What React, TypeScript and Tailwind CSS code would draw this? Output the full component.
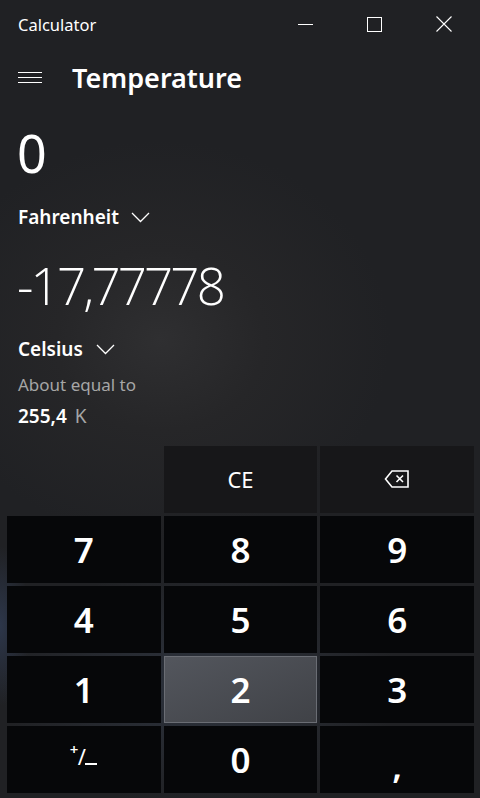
import React from "react";

const font = { fontFamily: '"Noto Sans", "Open Sans", "Liberation Sans", sans-serif' };

function Chevron() {
  return (
    <svg width="19" height="11" viewBox="0 0 19 11" fill="none" stroke="#ffffff" strokeWidth="1.3">
      <path d="M1 1 L9.5 9.5 L18 1" />
    </svg>
  );
}

function Key({ children, highlight, dim }: { children: React.ReactNode; highlight?: boolean; dim?: boolean }) {
  const base = "flex items-center justify-center text-white h-[67px]";
  const cls = highlight
    ? base + " bg-gradient-to-br from-[#53565d] to-[#404247] border border-[#6a6d74]"
    : dim
    ? base + " bg-[#171719]"
    : base + " bg-[#060709]";
  return <div className={cls}>{children}</div>;
}

export default function App() {
  return (
    <div
      className="w-[480px] h-[798px] overflow-hidden text-white flex flex-col relative"
      style={{
        ...font,
        background:
          "radial-gradient(ellipse 230px 200px at 160px 340px, #2f2f31 0%, #262628 45%, #202124 100%)",
      }}
    >
      {/* title bar */}
      <div className="h-[48px] flex items-start shrink-0">
        <div className="pl-[18px] pt-[17px] text-[16.5px] leading-none text-white flex-1">Calculator</div>
        <div className="flex pr-[2px] h-full">
          <div className="w-[69px] flex items-center justify-center">
            <div className="w-[15px] h-[1px] bg-white" />
          </div>
          <div className="w-[69px] flex items-center justify-center">
            <div className="w-[15px] h-[15px] border border-white" />
          </div>
          <div className="w-[69px] flex items-center justify-center">
            <svg width="16" height="16" viewBox="0 0 16 16" stroke="#fff" strokeWidth="1.1">
              <path d="M0.5 0.5 L15.5 15.5 M15.5 0.5 L0.5 15.5" />
            </svg>
          </div>
        </div>
      </div>

      {/* header */}
      <div className="flex items-start shrink-0">
        <div className="pl-[18px] w-[72px] flex flex-col gap-[4px] mt-[24px]">
          <div className="w-[24px] h-[1px] bg-white" />
          <div className="w-[24px] h-[1px] bg-white" />
          <div className="w-[24px] h-[1px] bg-white" />
        </div>
        <div className="text-[27px] font-semibold leading-none mt-[16px] h-[27px]">Temperature</div>
      </div>

      {/* input value */}
      <div className="pl-[17px] mt-[36px] text-[52px] leading-none h-[52px] shrink-0">0</div>

      <div className="pl-[18px] mt-[29px] h-[19px] flex items-start gap-[12px] shrink-0">
        <div className="text-[19px] font-semibold leading-none">Fahrenheit</div>
        <div className="mt-[4px]"><Chevron /></div>
      </div>

      {/* output value */}
      <div
        className="pl-[17px] mt-[33px] h-[51px] text-[51px] leading-none font-light tracking-[-2.8px] shrink-0"
        style={{ fontFamily: '"Open Sans", "Noto Sans", sans-serif' }}
      >
        -17,77778
      </div>

      <div className="pl-[18px] mt-[29px] h-[19px] flex items-start gap-[13px] shrink-0">
        <div className="text-[19px] font-semibold leading-none">Celsius</div>
        <div className="mt-[4px]"><Chevron /></div>
      </div>

      <div className="pl-[18px] mt-[17px] h-[17px] text-[17px] leading-none text-[#a6a6a6] shrink-0">About equal to</div>
      <div className="pl-[18px] mt-[14px] h-[19px] text-[19px] leading-none shrink-0 flex items-baseline gap-[8px]">
        <span className="font-semibold">255,4</span>
        <span className="text-[#a6a6a6]">K</span>
      </div>

      {/* keypad */}
      <div
        className="mt-auto pl-[7px] pr-[6px] pb-[5px] grid grid-cols-3 gap-[3px]"
        style={{
          background:
            "radial-gradient(ellipse 200px 120px at 200px 240px, rgba(70,85,110,0.35) 0%, rgba(40,45,55,0) 100%), radial-gradient(ellipse 30px 80px at 0px 180px, rgba(60,80,120,0.45) 0%, rgba(40,45,55,0) 100%)",
        }}
      >
        <div className="h-[67px]" />
        <Key dim>
          <span className="text-[22px] leading-none -mt-[2px]">CE</span>
        </Key>
        <Key dim>
          <svg width="26" height="20" viewBox="0 0 26 20" fill="none" stroke="#fff" strokeWidth="1.6" className="-mt-[2px]">
            <path d="M8 2 H24 V18 H8 L1.5 10 Z" strokeLinejoin="miter" />
            <path d="M12.5 6.5 L19 13 M19 6.5 L12.5 13" />
          </svg>
        </Key>
        {["7", "8", "9", "4", "5", "6", "1", "2", "3"].map((d) => (
          <Key key={d} highlight={d === "2"}>
            <span className="text-[35px] font-semibold leading-none">{d}</span>
          </Key>
        ))}
        <Key>
          <span className="relative w-[28px] h-[24px] block -mt-[8px]">
            <span className="absolute left-0 -top-[2px] text-[15px] font-semibold leading-none">+</span>
            <span className="absolute left-[8px] top-[1px] text-[22px] leading-none">/</span>
            <span className="absolute left-[15px] top-[19px] w-[12px] h-[2px] bg-white" />
          </span>
        </Key>
        <Key>
          <span className="text-[35px] font-semibold leading-none">0</span>
        </Key>
        <Key>
          <span className="text-[35px] font-semibold leading-none mt-[12px]">,</span>
        </Key>
      </div>
    </div>
  );
}
